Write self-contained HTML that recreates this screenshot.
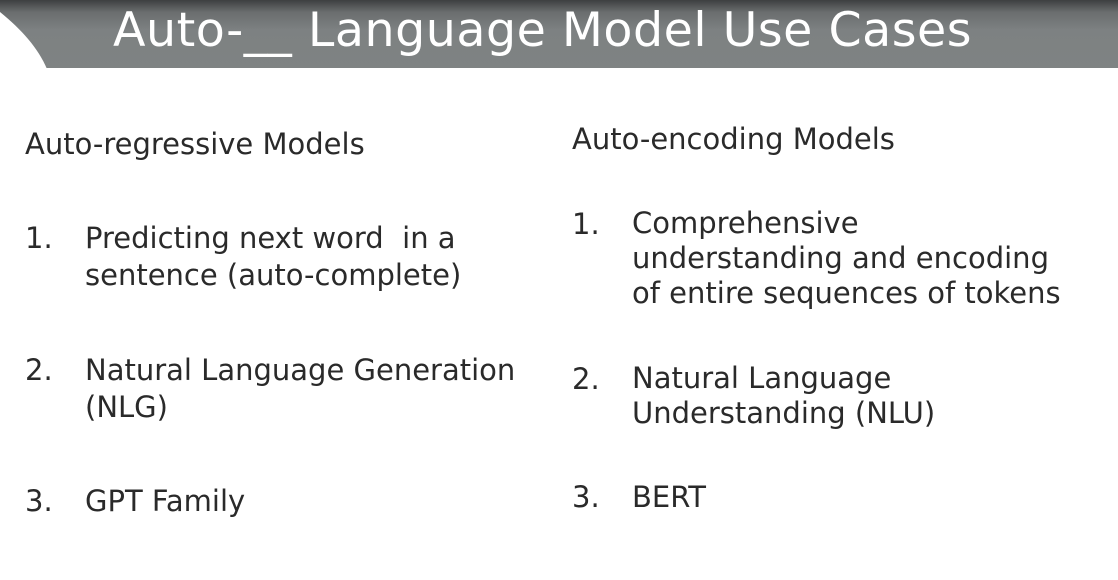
<!DOCTYPE html>
<html><head><style>
body{margin:0;width:1118px;height:580px;background:#fff;position:relative;overflow:hidden;font-family:"DejaVu Sans","Liberation Sans",sans-serif;color:#222}
.hdr{position:absolute;left:0;top:0;width:1118px;height:68px;background:linear-gradient(#3d3f40 0,#6a6d6e 12px,#7d8182 30px,#7f8383 68px)}
.curve{position:absolute;left:0;top:0}
.title{position:absolute;left:113px;top:3px;font-size:47.5px;color:#fff;white-space:nowrap;letter-spacing:0.5px}
.t{position:absolute;font-size:29px;white-space:nowrap;line-height:37px;color:#2a2a2a}
</style></head><body>
<div class="hdr"></div>
<svg class="curve" width="110" height="70"><path d="M0 12 C22 30 38 48 47 69 L0 69 Z" fill="#fff"/></svg>
<div class="title">Auto-__ Language Model Use Cases</div>
<div class="t" style="left:25px;top:126px">Auto-regressive Models</div>
<div class="t" style="left:25px;top:220px">1.</div>
<div class="t" style="left:85px;top:220px">Predicting next word&nbsp; in a<br>sentence (auto-complete)</div>
<div class="t" style="left:25px;top:352px">2.</div>
<div class="t" style="left:85px;top:352px">Natural Language Generation<br>(NLG)</div>
<div class="t" style="left:25px;top:483px">3.</div>
<div class="t" style="left:85px;top:483px">GPT Family</div>
<div class="t" style="left:572px;top:121px">Auto-encoding Models</div>
<div class="t" style="left:572px;top:206px">1.</div>
<div class="t" style="left:632px;top:206px;line-height:35px">Comprehensive<br>understanding and encoding<br>of entire sequences of tokens</div>
<div class="t" style="left:572px;top:361px">2.</div>
<div class="t" style="left:632px;top:361px;line-height:35px">Natural Language<br>Understanding (NLU)</div>
<div class="t" style="left:572px;top:479px">3.</div>
<div class="t" style="left:632px;top:479px">BERT</div>
</body></html>
